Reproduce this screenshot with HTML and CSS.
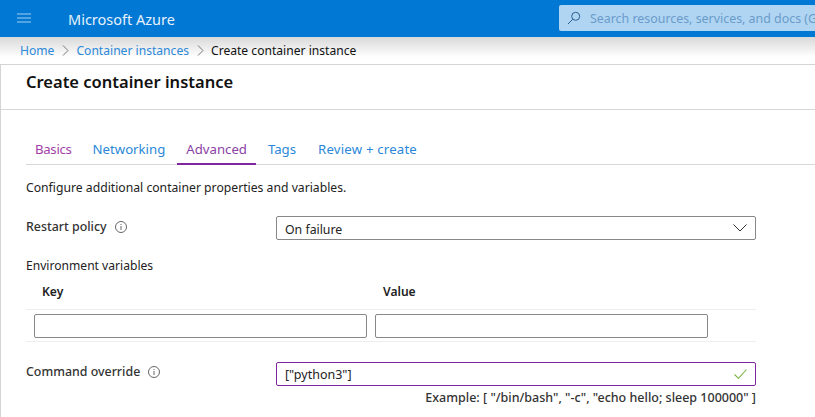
FILE: index.html
```html
<!DOCTYPE html>
<html lang="en">
<head>
  <meta charset="UTF-8">
  <title>Create container instance - Microsoft Azure</title>
  <meta name="viewport" content="width=device-width, initial-scale=1.0">
  <link rel="stylesheet" href="styles.css">
</head>
<body>
  <header class="topbar">
    <svg class="menu-icon" width="14" height="10" viewBox="0 0 14 10"><path d="M0 1h14M0 5h14M0 9h14" stroke="#a6cdee" stroke-width="1"/></svg>
    <div class="brand">Microsoft Azure</div>
    <div class="search">
      <svg class="search-icon" width="14" height="14" viewBox="0 0 14 14" fill="none" stroke="#2c5f92" stroke-width="1"><circle cx="8.7" cy="5.3" r="4"/><path d="M5.8 8.2 1 13"/></svg>
      <span class="search-text">Search resources, services, and docs (G+/)</span>
    </div>
  </header>
  <nav class="crumbs">
    <a>Home</a>
    <svg class="crumb-sep" width="7" height="11" viewBox="0 0 7 11" fill="none" stroke="#777" stroke-width="1"><path d="M1 .5l5 5-5 5"/></svg>
    <a>Container instances</a>
    <svg class="crumb-sep" width="7" height="11" viewBox="0 0 7 11" fill="none" stroke="#777" stroke-width="1"><path d="M1 .5l5 5-5 5"/></svg>
    <span>Create container instance</span>
  </nav>
  <main class="blade">
    <div class="blade-head">
      <h1>Create container instance</h1>
    </div>
    <div class="blade-body">
      <div class="tabs">
        <a class="tab visited">Basics</a>
        <a class="tab">Networking</a>
        <a class="tab active">Advanced</a>
        <a class="tab">Tags</a>
        <a class="tab review">Review + create</a>
      </div>
      <p class="intro">Configure additional container properties and variables.</p>
      <div class="field restart">
        <label>Restart policy
          <svg class="info" width="12" height="12" viewBox="0 0 12 12" fill="none" stroke="#666"><circle cx="6" cy="6" r="5.5"/><path d="M6 5v4M6 3v1"/></svg>
        </label>
        <div class="control select">
          <span>On failure</span>
          <svg width="14" height="8" viewBox="0 0 14 8" fill="none" stroke="#333"><path d="M.5.5 7 7 13.5.5"/></svg>
        </div>
      </div>
      <div class="env-title">Environment variables</div>
      <div class="env-head">
        <div class="env-key">Key</div>
        <div>Value</div>
      </div>
      <div class="env-row">
        <div class="control env-input key"></div>
        <div class="control env-input"></div>
      </div>
      <div class="field command">
        <label>Command override
          <svg class="info" width="12" height="12" viewBox="0 0 12 12" fill="none" stroke="#666"><circle cx="6" cy="6" r="5.5"/><path d="M6 5v4M6 3v1"/></svg>
        </label>
        <div class="control valid">
          <span>["python3"]</span>
          <svg width="13" height="10" viewBox="0 0 13 10" fill="none" stroke="#7ab648" stroke-width="1.1"><path d="M.5 5.5 4.5 9.3 12.5.5"/></svg>
        </div>
      </div>
      <div class="hint">Example: [ "/bin/bash", "-c", "echo hello; sleep 100000" ]</div>
    </div>
  </main>
</body>
</html>
```

FILE: styles.css
```css
* { box-sizing: border-box; }
html, body { height: 100%; }
body { margin: 0; width: 815px; height: 417px; overflow: hidden; background: #fff; color: #222; font-family: "Noto Sans", sans-serif; font-size: 12.1px; }
.topbar { display: flex; align-items: center; height: 37px; background: #0078d4; overflow: hidden; }
.menu-icon { margin-left: 17px; margin-top: -2px; flex: none; }
.brand { margin-left: 37px; color: #e6f1fb; font-size: 14.5px; flex: none; width: 491px; }
.search { display: flex; align-items: center; width: 300px; height: 26px; margin-top: -1px; flex: none; background: #b0d5f2; border-radius: 2px; padding-left: 8px; }
.search-icon { flex: none; }
.search-text { margin-left: 9px; color: #6a9bcb; font-size: 12.4px; white-space: nowrap; }
.crumbs { display: flex; align-items: center; height: 28px; padding-left: 20px; background: linear-gradient(#d9d9d9, #fff 75%); border-bottom: 1px solid #d4d4d4; color: #111; }
.crumbs a { color: #2b88d8; }
.crumb-sep { margin: 0 7.5px; }
.blade { border-left: 1px solid #d4d4d4; height: 352px; }
.blade-head { height: 45px; padding: 5px 0 0 25px; border-bottom: 1px solid #d8d8d8; }
h1 { margin: 0; font-size: 16.5px; font-weight: 600; color: #111; }
.blade-body { padding: 26px 0 0 25px; }
.tabs { display: flex; border-bottom: 1px solid #d8d8d8; height: 29px; font-size: 13.2px; }
.tab { height: 29px; padding: 0 9px; color: #2b88d8; line-height: 26px; margin-right: 3px; }
.visited { color: #a33fa8; letter-spacing: -.3px; }
.review { letter-spacing: .2px; margin-left: 1px; }
.active { color: #8a3fa5; border-bottom: 2px solid #80279f; }
.intro { margin: 14px 0 0; color: #222; font-size: 12.2px; }
.field { display: flex; align-items: flex-start; }
.field label { width: 250px; padding-top: 2px; color: #333; font-weight: 500; line-height: 17px; font-size: 12.4px; }
.info { margin-left: 5px; vertical-align: -2px; }
.control { display: flex; align-items: center; justify-content: space-between; height: 24px; padding: 0 8px; border: 1px solid #888; border-radius: 2px; background: #fff; }
.select { width: 480px; padding-top: 2px; font-size: 12.3px; }
.select svg { margin-top: -2px; }
.valid { width: 480px; border-color: #80279f; font-size: 12.5px; }
.restart { margin-top: 20px; }
.env-title { margin-top: 17px; }
.env-head { display: flex; margin-top: 8px; height: 28px; width: 730px; padding: 0 0 0 16px; font-weight: 600; border-bottom: 1px solid #eee; line-height: 19px; }
.env-key { width: 341px; }
.env-row { display: flex; gap: 8px; width: 730px; height: 32px; padding: 4px 0 0 8px; border-bottom: 1px solid #eee; }
.env-input { width: 333px; }
.command { margin-top: 20px; }
.command label { padding-top: 1px; }
.hint { width: 730px; margin-top: 3px; text-align: right; color: #333; font-weight: 500; font-size: 12.5px; }
```
